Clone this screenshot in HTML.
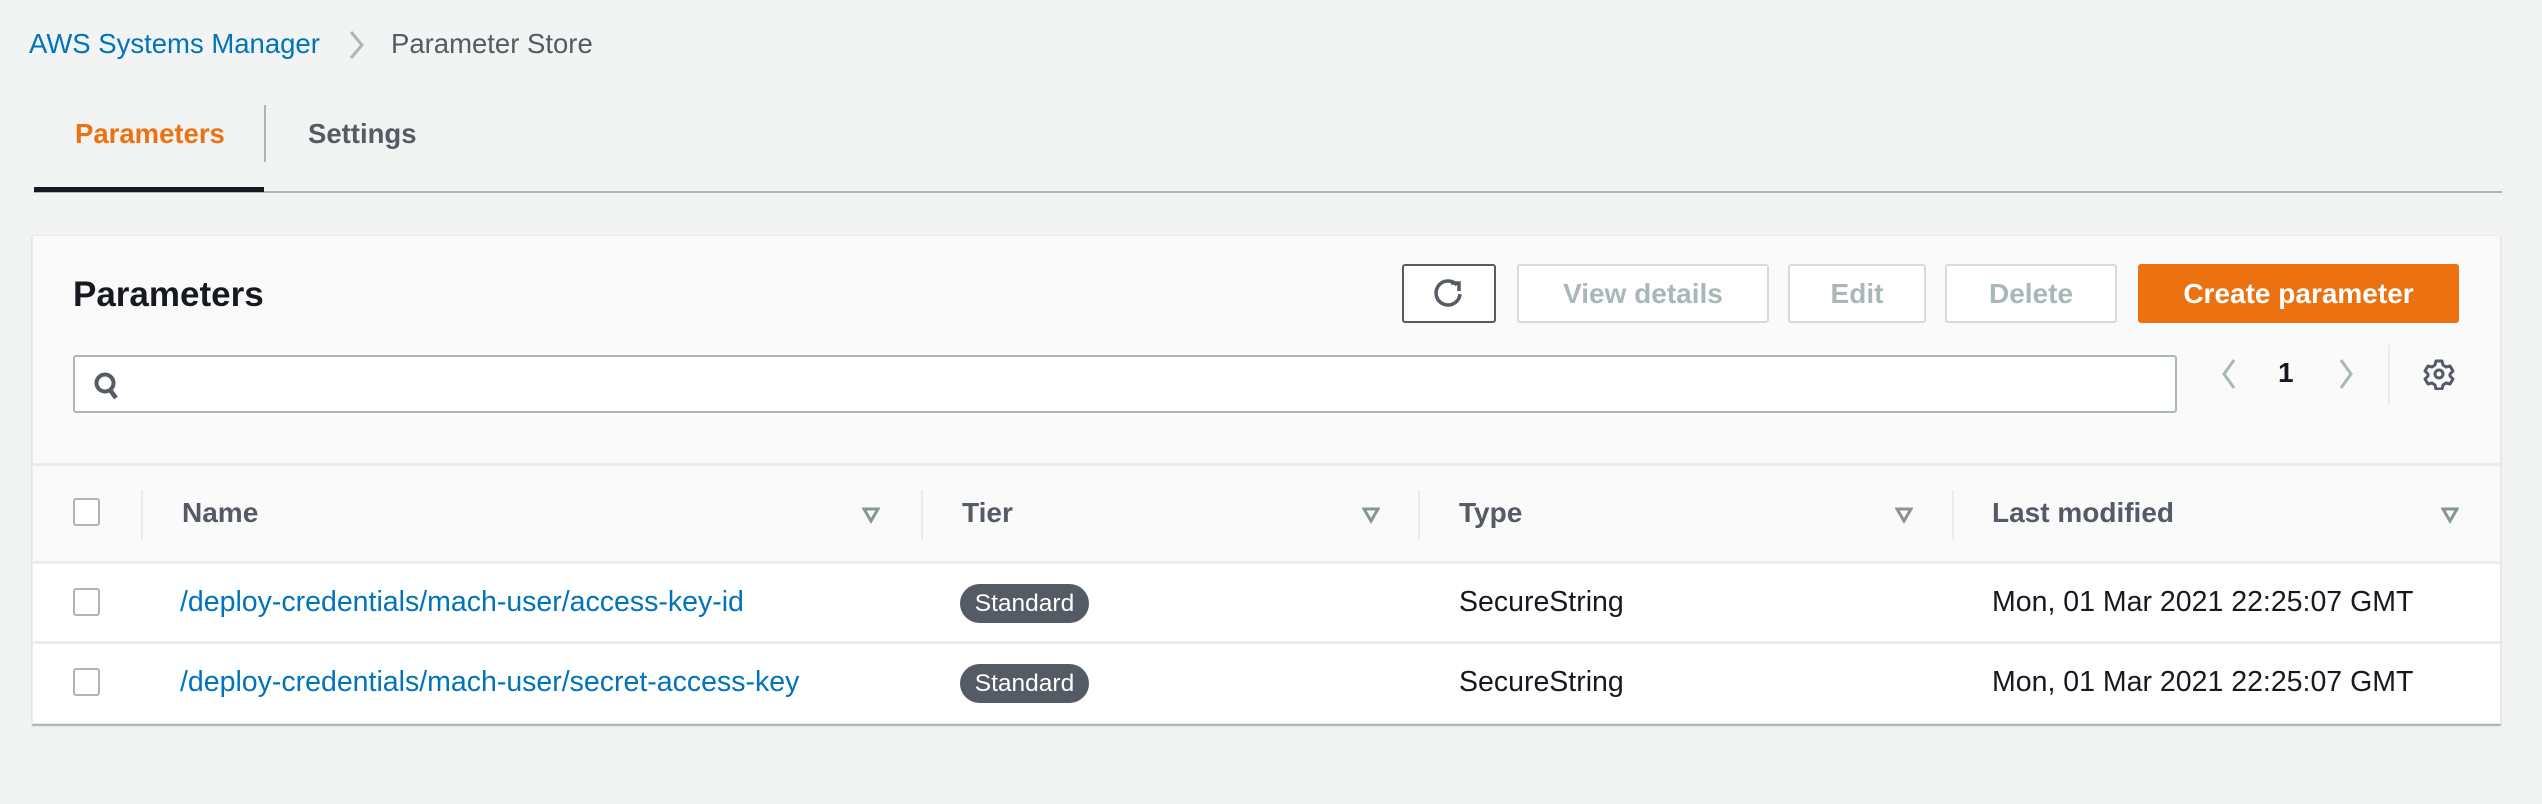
<!DOCTYPE html>
<html><head><meta charset="utf-8"><style>
*{margin:0;padding:0;box-sizing:border-box}
body{width:2542px;height:804px;background:#f2f3f3;font-family:"Liberation Sans",Arial,sans-serif;position:relative;overflow:hidden;color:#16191f}
.a{position:absolute;white-space:nowrap}
.btn{position:absolute;border:2px solid #d5dbdb;border-radius:3px;background:#fff;color:#aab7b8;font-weight:bold;font-size:28px;display:flex;align-items:center;justify-content:center}
.cb{position:absolute;width:27px;height:28px;border:2px solid #aab7b8;border-radius:3px;background:#fff}
.th{position:absolute;font-weight:bold;font-size:28px;color:#545b64;top:497px}
.div{position:absolute;width:2px;background:#eaeded;top:490px;height:50px}
.sort{position:absolute;top:506px}
.lnk{position:absolute;color:#0073bb;font-size:28.5px}
.badge{position:absolute;left:960px;width:129px;height:39px;border-radius:20px;background:#545b64;color:#fff;font-size:24.5px;display:flex;align-items:center;justify-content:center}
.td{position:absolute;font-size:28.5px}
</style></head><body>
<div class="a" style="left:29px;top:28px;font-size:27.5px;color:#0073bb">AWS Systems Manager</div>
<svg class="a" style="left:347px;top:30px" width="20" height="30"><path d="M4 2 L15 15 L4 28" fill="none" stroke="#aab7b8" stroke-width="3"/></svg>
<div class="a" style="left:391px;top:28px;font-size:27.5px;color:#545b64">Parameter Store</div>

<div class="a" style="left:75px;top:118px;font-size:27.5px;font-weight:bold;color:#ec7211">Parameters</div>
<div class="a" style="left:264px;top:105px;width:2px;height:57px;background:#aab7b8"></div>
<div class="a" style="left:308px;top:118px;font-size:27.5px;font-weight:bold;color:#545b64">Settings</div>
<div class="a" style="left:34px;top:191px;width:2468px;height:2px;background:#aab7b8"></div>
<div class="a" style="left:34px;top:187px;width:230px;height:5px;background:#16191f"></div>

<div class="a" style="left:32px;top:235px;width:2469px;height:489px;background:#fafafa;border:1px solid #eaeded;box-shadow:0 2px 1px rgba(0,28,36,.3)"></div>
<div class="a" style="left:33px;top:463px;width:2467px;height:3px;background:#eaeded"></div>
<div class="a" style="left:33px;top:563px;width:2467px;height:160px;background:#fff"></div>
<div class="a" style="left:33px;top:561px;width:2467px;height:3px;background:#eaeded"></div>
<div class="a" style="left:33px;top:641px;width:2467px;height:3px;background:#eaeded"></div>

<div class="a" style="left:73px;top:275px;font-size:35px;font-weight:bold">Parameters</div>

<div class="btn" style="left:1402px;top:264px;width:94px;height:59px;border-color:#545b64"><svg width="36" height="36" viewBox="0 0 36 36"><path d="M26 9 A12 12 0 1 0 29 18" fill="none" stroke="#545b64" stroke-width="3.5"/><path d="M20 7 L28 7 L28 15" fill="none" stroke="#545b64" stroke-width="3.5"/></svg></div>
<div class="btn" style="left:1517px;top:264px;width:252px;height:59px">View details</div>
<div class="btn" style="left:1788px;top:264px;width:138px;height:59px">Edit</div>
<div class="btn" style="left:1945px;top:264px;width:172px;height:59px">Delete</div>
<div class="btn" style="left:2138px;top:264px;width:321px;height:59px;background:#ec7211;border-color:#ec7211;color:#fff">Create parameter</div>

<div class="a" style="left:73px;top:355px;width:2104px;height:58px;background:#fff;border:2px solid #aab7b8;border-radius:3px"></div>
<svg class="a" style="left:92px;top:370px" width="32" height="32" viewBox="0 0 32 32"><circle cx="13" cy="13" r="8.5" fill="none" stroke="#545b64" stroke-width="4"/><path d="M18 20 L24 28" stroke="#545b64" stroke-width="4.5"/></svg>

<svg class="a" style="left:2219px;top:358px" width="20" height="32"><path d="M15 2 L5 16 L15 30" fill="none" stroke="#aab7b8" stroke-width="3"/></svg>
<div class="a" style="left:2278px;top:357px;font-size:28px;font-weight:bold">1</div>
<svg class="a" style="left:2336px;top:358px" width="20" height="32"><path d="M5 2 L15 16 L5 30" fill="none" stroke="#aab7b8" stroke-width="3"/></svg>
<div class="a" style="left:2388px;top:345px;width:2px;height:60px;background:#eaeded"></div>
<svg class="a" style="left:2423px;top:358px" width="32" height="32" viewBox="0 0 32 32"><circle cx="16" cy="16" r="4" fill="none" stroke="#545b64" stroke-width="3"/><path d="M13 3h6l1 4 3 2 4-1 3 5-3 3v2l3 3-3 5-4-1-3 2-1 4h-6l-1-4-3-2-4 1-3-5 3-3v-2l-3-3 3-5 4 1 3-2z" fill="none" stroke="#545b64" stroke-width="3" stroke-linejoin="round"/></svg>

<div class="cb" style="left:73px;top:498px"></div>
<div class="div" style="left:141px"></div>
<div class="th" style="left:182px">Name</div>
<svg class="sort" style="left:862px" width="18" height="18"><path d="M2 3 L16 3 L9 15 Z" fill="none" stroke="#879596" stroke-width="3"/></svg>
<div class="div" style="left:921px"></div>
<div class="th" style="left:962px">Tier</div>
<svg class="sort" style="left:1362px" width="18" height="18"><path d="M2 3 L16 3 L9 15 Z" fill="none" stroke="#879596" stroke-width="3"/></svg>
<div class="div" style="left:1418px"></div>
<div class="th" style="left:1459px">Type</div>
<svg class="sort" style="left:1895px" width="18" height="18"><path d="M2 3 L16 3 L9 15 Z" fill="none" stroke="#879596" stroke-width="3"/></svg>
<div class="div" style="left:1952px"></div>
<div class="th" style="left:1992px">Last modified</div>
<svg class="sort" style="left:2441px" width="18" height="18"><path d="M2 3 L16 3 L9 15 Z" fill="none" stroke="#879596" stroke-width="3"/></svg>

<div class="cb" style="left:73px;top:588px"></div>
<div class="lnk" style="left:180px;top:586px">/deploy-credentials/mach-user/access-key-id</div>
<div class="badge" style="top:584px">Standard</div>
<div class="td" style="left:1459px;top:586px">SecureString</div>
<div class="td" style="left:1992px;top:586px">Mon, 01 Mar 2021 22:25:07 GMT</div>

<div class="cb" style="left:73px;top:668px"></div>
<div class="lnk" style="left:180px;top:666px">/deploy-credentials/mach-user/secret-access-key</div>
<div class="badge" style="top:664px">Standard</div>
<div class="td" style="left:1459px;top:666px">SecureString</div>
<div class="td" style="left:1992px;top:666px">Mon, 01 Mar 2021 22:25:07 GMT</div>
</body></html>
